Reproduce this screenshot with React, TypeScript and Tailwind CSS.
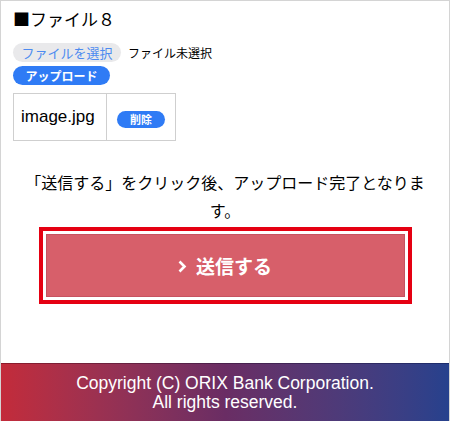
const jp = { fontFamily: '"Noto Sans CJK JP", "Noto Sans", sans-serif' };

export default function App() {
  return (
    <div
      className="w-[450px] h-[421px] overflow-hidden bg-white border-t border-x border-[#d4d4d4] flex flex-col"
      style={jp}
    >
      <div className="flex-1 px-[12px]">
        <h2 className="mt-[6px] text-[17px] leading-[24px] text-black">■ファイル８</h2>

        <div className="mt-[12px] flex items-center gap-[7px]">
          <button className="h-[19px] w-[108px] rounded-full bg-[#e9e9eb] text-[13px] leading-[19px] text-[#4d8bf0]">
            ファイルを選択
          </button>
          <span className="text-[12px] text-black">ファイル未選択</span>
        </div>

        <button className="mt-[4px] h-[19px] w-[97px] rounded-full bg-[#2f7bf5] text-[12px] leading-[19px] font-bold text-white">
          アップロード
        </button>

        <table className="mt-[7px] border-collapse">
          <tbody>
            <tr className="h-[47px]">
              <td
                className="border border-[#cfcfcf] w-[93px] px-[7px] text-[17px] text-black"
                style={{ fontFamily: '"Liberation Sans", "Noto Sans CJK JP", sans-serif' }}
              >
                image.jpg
              </td>
              <td className="border border-[#cfcfcf] w-[69px] px-[10px]">
                <button className="h-[17px] w-[48px] rounded-full bg-[#2f7bf5] text-[11px] leading-[17px] font-bold text-white">
                  削除
                </button>
              </td>
            </tr>
          </tbody>
        </table>

        <p className="mt-[27px] mx-auto w-[400px] text-center text-[16px] leading-[28px] text-black">
          「送信する」をクリック後、アップロード完了となります。
        </p>

        <div className="mt-[3px] mx-auto w-[373px] border-[4px] border-[#e50012] p-[3px]">
          <button className="w-full h-[63px] bg-[#d75f6a] border border-[#c75260] flex items-center justify-center gap-[9px] text-white">
            <svg width="9" height="13" viewBox="0 0 9 13" className="mt-[1px]">
              <path d="M1.5 1.5 L6.5 6.5 L1.5 11.5" fill="none" stroke="white" strokeWidth="2.6" />
            </svg>
            <span className="text-[19px] font-bold leading-none">送信する</span>
          </button>
        </div>
      </div>

      <footer className="h-[58px] bg-linear-to-r from-[#c32b3a] via-[#6a2d64] to-[#26418d] flex flex-col">
        <div className="h-px bg-linear-to-r from-[#8e1a2a] via-[#4a1f4c] to-[#1b2d6e]" />
        <div
          className="flex-1 flex flex-col items-center justify-center text-[17.5px] leading-[19px] text-white"
          style={{ fontFamily: '"Liberation Sans", Arial, sans-serif' }}
        >
          <span>Copyright (C) ORIX Bank Corporation.</span>
          <span>All rights reserved.</span>
        </div>
      </footer>
    </div>
  );
}
